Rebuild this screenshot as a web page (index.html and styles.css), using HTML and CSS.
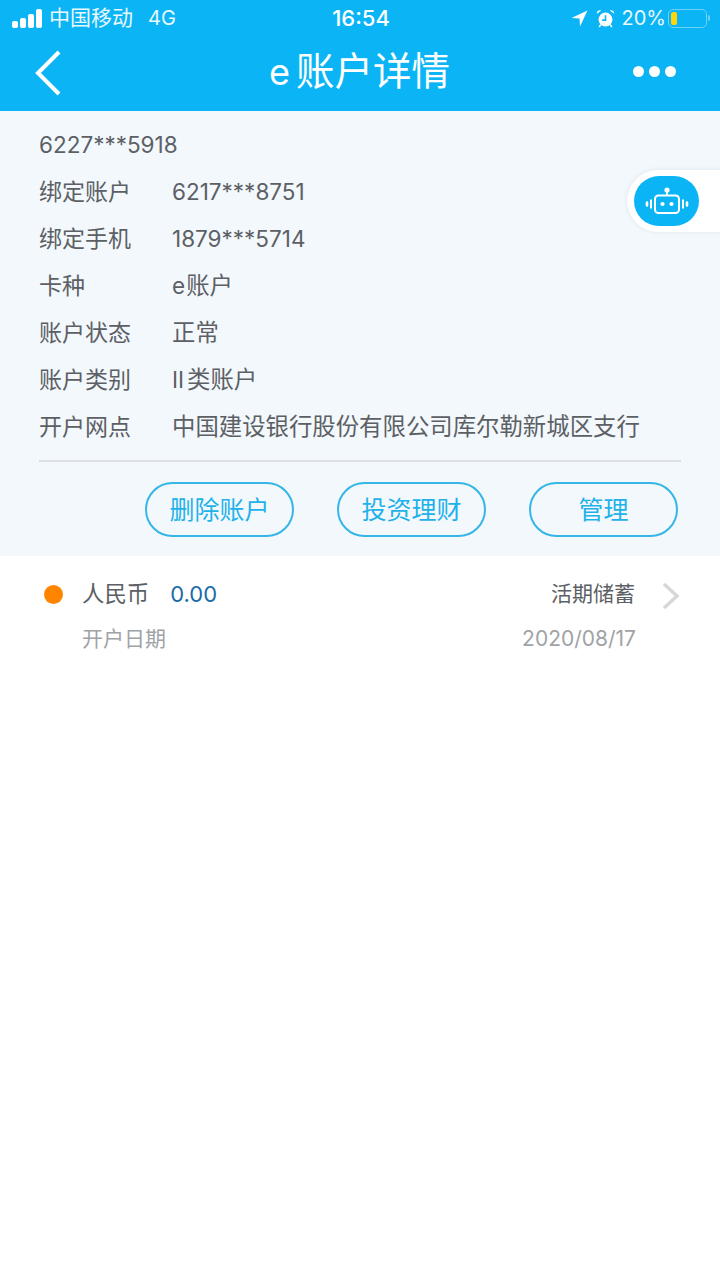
FILE: index.html
```html
<!DOCTYPE html>
<html lang="zh-CN">
<head>
    <meta charset="utf-8" />
    <title>e账户详情</title>
    <link rel="stylesheet" href="styles.css">
</head>
<body>
    <div class="top">
        <div class="status">
            <div class="status_left">
                <div class="signal"><i></i><i></i><i></i><i></i></div>
                <span>中国移动</span>
                <span class="net">4G</span>
            </div>
            <div class="clock">16:54</div>
            <div class="status_right">
                <svg class="arrow" width="17" height="17" viewBox="0 0 16 16"><path d="M15.5 .5 L.5 7.5 L8 8 L8.5 15.5 Z" fill="#fff"/></svg>
                <svg class="alarm" width="19" height="19" viewBox="0 0 18 18">
                    <circle cx="9" cy="10" r="6.6" fill="#fff"/>
                    <path d="M9 6 V10.5 H5.8" fill="none" stroke="#0bb5f5" stroke-width="1.5"/>
                    <path d="M.8 4.6 A3 3 0 0 1 5 1.4 Z M17.2 4.6 A3 3 0 0 0 13 1.4 Z" fill="#fff"/>
                    <path d="M4.5 15 L3 17 M13.5 15 L15 17" stroke="#fff" stroke-width="1.5"/>
                </svg>
                <span class="pct">20%</span>
                <div class="battery"><div class="battery_fill"></div></div>
                <div class="battery_tip"></div>
            </div>
        </div>
        <div class="nav">
            <svg class="back" width="28" height="46" viewBox="0 0 28 46"><path d="M25 2 L4 23 L25 44" fill="none" stroke="#fff" stroke-width="4"/></svg>
            <h1><span class="title_e">e</span>账户详情</h1>
            <div class="dots"><i></i><i></i><i></i></div>
        </div>
    </div>

    <div class="panel">
        <div class="info">
            <div class="row"><span class="num">6227***5918</span></div>
            <div class="row"><span class="label">绑定账户</span><span class="num">6217***8751</span></div>
            <div class="row"><span class="label">绑定手机</span><span class="num">1879***5714</span></div>
            <div class="row"><span class="label">卡种</span><span class="value"><span class="num gap_small">e</span>账户</span></div>
            <div class="row"><span class="label">账户状态</span><span class="value">正常</span></div>
            <div class="row"><span class="label">账户类别</span><span class="value"><span class="num gap">II</span>类账户</span></div>
            <div class="row"><span class="label">开户网点</span><span class="value">中国建设银行股份有限公司库尔勒新城区支行</span></div>
        </div>
        <div class="buttons">
            <div class="btn">删除账户</div>
            <div class="btn">投资理财</div>
            <div class="btn">管理</div>
        </div>
    </div>

    <div class="account">
        <div class="account_line">
            <div class="dot"></div>
            <span class="currency">人民币</span>
            <span class="balance">0.00</span>
            <span class="type">活期储蓄</span>
            <svg class="chevron" width="18" height="28" viewBox="0 0 18 28"><path d="M2 2 L15 14 L2 26" fill="none" stroke="#d5d7d9" stroke-width="3.4"/></svg>
        </div>
        <div class="date_line">
            <span>开户日期</span>
            <span>2020/08/17</span>
        </div>
    </div>

    <div class="robot_wrap">
        <div class="robot">
            <svg width="44" height="28" viewBox="0 0 44 28">
                <circle cx="22" cy="3" r="2.6" fill="#fff"/>
                <path d="M22 5 V9" stroke="#fff" stroke-width="1.8"/>
                <rect x="10" y="8.5" width="24" height="17.5" rx="3.5" fill="none" stroke="#fff" stroke-width="2"/>
                <circle cx="17.5" cy="17" r="2.1" fill="#fff"/>
                <circle cx="26.5" cy="17" r="2.1" fill="#fff"/>
                <path d="M6 12.5 V21.5 M38 12.5 V21.5" stroke="#fff" stroke-width="2"/>
                <path d="M2 15.5 V18.5 M42 15.5 V18.5" stroke="#fff" stroke-width="2.6" stroke-linecap="round"/>
            </svg>
        </div>
    </div>
</body>
</html>
```

FILE: styles.css
```css
* {
    box-sizing: border-box;
}
html {
    background: #fff;
}
body {
    position: relative;
    margin: 0;
    width: 720px;
    min-height: 1280px;
    font-family: "Inter", "Noto Sans CJK SC", sans-serif;
    line-height: 30px;
    color: #5c6065;
    background: #fff;
}
.top {
    height: 111px;
    background: #0bb5f5;
    color: #fff;
}
.status {
    display: flex;
    align-items: center;
    justify-content: space-between;
    height: 36px;
    padding: 0 10px 0 12px;
    font-size: 21px;
    color: #e8f8fe;
}
.status_left, .status_right {
    display: flex;
    align-items: center;
    width: 280px;
}
.status_right {
    justify-content: flex-end;
}
.signal {
    display: flex;
    align-items: flex-end;
    gap: 2px;
    height: 19px;
    margin-right: 7px;
}
.signal i {
    display: block;
    width: 6px;
    border-radius: 2px;
    background: #fff;
}
.signal i:nth-child(1) { height: 7px; }
.signal i:nth-child(2) { height: 10px; }
.signal i:nth-child(3) { height: 14px; }
.signal i:nth-child(4) { height: 19px; }
.net {
    margin-left: 15px;
    font-size: 20px;
}
.clock {
    font-size: 22px;
    font-weight: 500;
    color: #fff;
}
.arrow {
    margin-right: 8px;
}
.alarm {
    margin-right: 7px;
}
.pct {
    font-size: 20px;
}
.battery {
    width: 39px;
    height: 19px;
    margin-left: 2px;
    padding: 2px;
    border: 1.5px solid #6dd2f8;
    border-radius: 5px;
}
.battery_fill {
    width: 6px;
    height: 100%;
    border-radius: 2px;
    background: #ffd60a;
}
.battery_tip {
    width: 2px;
    height: 6px;
    margin-left: 1px;
    border-radius: 0 2px 2px 0;
    background: #6dd2f8;
}
.nav {
    display: flex;
    align-items: center;
    justify-content: space-between;
    height: 75px;
    padding: 0 44px 4px 34px;
}
.back {
    margin-top: 2px;
}
.nav h1 {
    margin: 0 0 0 24px;
    font-size: 38.5px;
    font-weight: 400;
    line-height: 46px;
}
.title_e {
    margin-right: 6px;
    font-size: 36px;
}
.dots {
    display: flex;
    gap: 5px;
}
.dots i {
    display: block;
    width: 11px;
    height: 11px;
    border-radius: 50%;
    background: #fff;
}
.panel {
    height: 445px;
    padding: 10px 39px 0 39px;
    background: #f3f8fc;
}
.info {
    border-bottom: 2px solid #dcdfe3;
    padding-bottom: 10px;
}
.row {
    display: flex;
    align-items: center;
    height: 47px;
    font-size: 23px;
    white-space: nowrap;
}
.label {
    width: 133px;
}
.value {
    font-size: 23.4px;
}
.num {
    font-size: 22.5px;
}
.gap {
    margin-right: 3px;
}
.gap_small {
    margin-right: 1px;
}
.buttons {
    display: flex;
    justify-content: flex-end;
    gap: 43px;
    margin-top: 20px;
    padding-right: 3px;
}
.btn {
    display: flex;
    align-items: center;
    justify-content: center;
    width: 149px;
    height: 55px;
    border: 2px solid #35b6e6;
    border-radius: 28px;
    font-size: 25px;
    color: #1fb2ea;
}
.account {
    padding: 16px 40px 0 44px;
}
.account_line {
    display: flex;
    align-items: center;
    height: 44px;
    font-size: 22.4px;
}
.dot {
    width: 19px;
    height: 19px;
    margin-right: 19px;
    border-radius: 50%;
    background: #ff8400;
}
.balance {
    margin-left: 21px;
    font-size: 22px;
    color: #1a6ba8;
}
.type {
    margin-left: auto;
    font-size: 21px;
}
.chevron {
    margin: 4px 0 0 27px;
}
.date_line {
    display: flex;
    justify-content: space-between;
    margin-top: 8px;
    padding: 0 44px 0 38px;
    font-size: 21px;
    color: #a0a3a6;
}
.robot_wrap {
    position: absolute;
    top: 170px;
    right: 0;
    width: 93px;
    height: 62px;
    padding: 6px 0 0 7px;
    border-radius: 31px 0 0 31px;
    background: #fff;
    box-shadow: 0 0 4px rgba(150, 175, 195, 0.25);
}
.robot {
    display: flex;
    align-items: center;
    justify-content: center;
    width: 65px;
    height: 50px;
    border-radius: 25px;
    background: #0bb5f5;
}
```
